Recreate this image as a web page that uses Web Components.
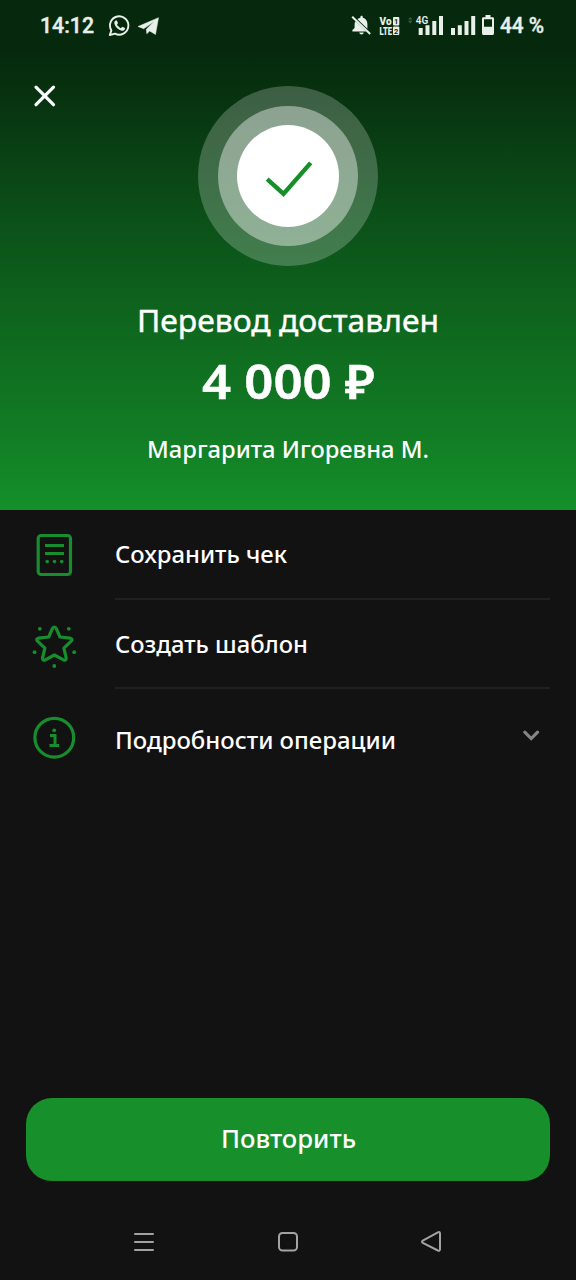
<!DOCTYPE html>
<html lang="ru">
<head>
<meta charset="utf-8">
<title>Перевод доставлен</title>
<style>
body { margin: 0; background: #121212; }
</style>
</head>
<body>
<transfer-screen></transfer-screen>
<script>
const define = (name, html) => {
  const template = document.createElement('template');
  template.innerHTML = html;
  customElements.define(name, class extends HTMLElement {
    constructor() {
      super();
      this.attachShadow({ mode: 'open' }).append(template.content.cloneNode(true));
    }
  });
};

// One line of text set to a fixed measure, left edge and baseline inside its own box.
customElements.define('text-line', class extends HTMLElement {
  connectedCallback() {
    if (this.shadowRoot) return;
    const a = n => this.getAttribute(n);
    this.attachShadow({ mode: 'open' }).innerHTML = `
      <style>
        :host { display: block; flex: none; }
        svg { display: block; overflow: visible; }
        text { fill: currentColor; font-family: ${a('face') || '"Noto Sans"'}, sans-serif;
               font-size: ${a('size')}px; font-weight: ${a('weight') || 500};
               stroke: currentColor; stroke-width: ${a('heft') || 0}; }
      </style>
      <svg width="${a('measure')}" height="${a('height')}"><text x="0" y="${a('baseline')}" textLength="${a('measure')}" lengthAdjust="spacingAndGlyphs">${a('text')}</text></svg>`;
  }
});

define('status-bar', `
<style>
  :host { display: flex; height: 52px; padding-left: 40px; box-sizing: border-box; color: #e9f0ea; }
  svg { display: block; flex: none; }
  .right { margin-left: auto; display: flex; width: 236px; }
</style>
<text-line text="14:12" face="Roboto" size="21.5" weight="500" measure="54" height="52" baseline="33" heft=".4"></text-line>
<svg width="70" height="52" viewBox="94 0 70 52" fill="none" stroke="currentColor">
  <path d="M109.800 35l1.600-4.600a9.200 9.200 0 1 1 3.600 3.300z" stroke-width="1.900" stroke-linejoin="round"/>
  <path d="M115.800 20.400c-1.300.6-1.800 2-1.300 3.600.9 3 4 6 7.200 6.700 1.500.3 2.900-.5 3.200-1.700l.1-1-2.700-1.300-1.400 1.500c-1.800-.8-3.100-2-3.900-3.600l1-1.300-1.100-2.800z" fill="currentColor" stroke="none"/>
  <path d="M138 26.500 158.500 17.700 155.500 34.500 149.700 31 146.800 33.700 146.300 29.200 154 21.600 143.700 28.700z" fill="currentColor" stroke="currentColor" stroke-width=".5"/>
</svg>
<div class="right">
  <svg width="160" height="52" viewBox="340 0 160 52" fill="currentColor">
    <path d="M355.600 21.200 366.200 31.400H352.400v-1.300l2.200-2V24q0-1.600 1-2.800zM357.500 19.300q1.200-1.100 2.900-1.500v-.8c0-1.600 2.400-1.600 2.400 0v.8c2.900.8 4.600 3.100 4.600 6.100v4.900z"/>
    <path d="M359.200 32.600h4.600c-.5 2.600-4.100 2.600-4.600 0z"/>
    <path d="M352.200 16.800l18 17.200" stroke="currentColor" stroke-width="2"/>
    <g font-family="Roboto, sans-serif" font-weight="900">
      <text x="379.500" y="25" font-size="10" textLength="12" lengthAdjust="spacingAndGlyphs">Vo</text>
      <text x="379.500" y="34.500" font-size="10" textLength="12.500" lengthAdjust="spacingAndGlyphs">LTE</text>
      <rect x="393" y="16.900" width="6.300" height="8.500" rx="1"/>
      <rect x="393" y="26.400" width="6.300" height="8.500" rx="1"/>
      <g fill="#06290e" font-weight="700"><text x="394" y="24" font-size="7.500">1</text><text x="394" y="33.500" font-size="7.500">2</text></g>
      <text x="415.800" y="24" font-size="11" font-weight="600" textLength="12.500" lengthAdjust="spacingAndGlyphs">4G</text>
    </g>
    <path d="M408 19.500l2.300-2.600 2.300 2.600zM408 20.800l2.300 2.600 2.300-2.600z" opacity=".25"/>
    <path d="M418.700 28h4v7h-4zM425.500 25.300h4v9.700h-4zM432.300 21h4v14h-4zM439 16h4v19h-4z"/>
    <path d="M451 28h4v7h-4zM457.800 25.300h4v9.700h-4zM464.500 21h4v14h-4zM471.200 16h4v19h-4z"/>
    <path fill-rule="evenodd" d="M485.500 15h5v2.300h2.200q1.300 0 1.300 1.300v15q0 1.400-1.300 1.400h-9.400q-1.300 0-1.300-1.400v-15q0-1.300 1.300-1.300h2.200zM484 19.300v7.400h8v-7.400z"/>
  </svg>
  <text-line text="44 %" face="Roboto" size="21.5" weight="500" measure="44" height="52" baseline="33" heft=".4"></text-line>
</div>`);

define('success-mark', `
<style>
  :host, .ring { display: grid; place-items: center; border-radius: 50%; }
  :host { width: 180px; height: 180px; background: rgba(255,255,255,.22); }
  .ring { width: 140px; height: 140px; background: rgba(255,255,255,.41); }
  .disc { width: 102px; height: 102px; border-radius: 50%; background: #fff; }
  svg { display: block; }
</style>
<div class="ring"><div class="disc">
  <svg width="102" height="102" viewBox="237 125 102 102"><path d="M267.200 179.200l16.300 14.700 27.200-31" fill="none" stroke="#159029" stroke-width="4.400"/></svg>
</div></div>`);

define('transfer-hero', `
<style>
  :host { display: flex; flex-direction: column; align-items: center; height: 510px; color: #fff; position: relative;
    background: linear-gradient(#06290e 0, #06290e 50px, #07310f 90px, #0a4215 160px, #0c551a 240px, #0f6a1f 340px, #127b25 430px, #149029 510px); }
  status-bar { align-self: stretch; flex: none; }
  .close { position: absolute; left: 33px; top: 84px; width: 24px; height: 24px; }
  success-mark { margin-top: 34px; flex: none; }
  .title { margin-top: 34px; }
  .sum { margin-top: 10px; }
  .name { margin-top: 22px; }
</style>
<status-bar></status-bar>
<svg class="close" viewBox="0 0 24 24"><path d="M3 3.200 20.500 20.700M20.500 3.200 3 20.700" stroke="#fff" stroke-width="3.200" stroke-linecap="round"/></svg>
<success-mark></success-mark>
<text-line class="title" text="Перевод доставлен" size="31" weight="400" measure="302" height="42" baseline="32.300" heft=".4"></text-line>
<text-line class="sum" text="4 000 ₽" size="47.500" weight="600" measure="173" height="58" baseline="46.700" heft=".5"></text-line>
<text-line class="name" text="Маргарита Игоревна М." size="24" measure="282" height="34" baseline="26"></text-line>`);

define('action-row', `
<style>
  :host { display: flex; align-items: stretch; padding: 0 26px 0 32px; box-sizing: border-box; height: var(--row, 89px); color: #fff; }
  .icon { width: 83px; flex: none; color: #188d2d; }
  .body { flex: 1; display: flex; justify-content: space-between; border-bottom: 2px solid var(--line, #202020); }
</style>
<div class="icon"><slot name="icon"></slot></div>
<div class="body"><slot></slot><slot name="end"></slot></div>`);

define('primary-button', `
<style>
  :host { display: flex; justify-content: center; height: 83px; border-radius: 26px; background: #178f2b; color: #fff; }
</style>
<slot></slot>`);

define('nav-bar', `
<style>
  :host { display: flex; justify-content: space-around; padding: 0 72px; color: #a3a3a3; }
  svg { display: block; width: 24px; height: 24px; fill: none; stroke: currentColor; stroke-width: 2; stroke-linecap: round; stroke-linejoin: round; }
</style>
<svg viewBox="132 1230 24 24"><path d="M135 1234h18M135 1242h18M135 1250h18"/></svg>
<svg viewBox="276 1230 24 24"><rect x="279" y="1233" width="18" height="17.600" rx="3.500"/></svg>
<svg viewBox="419.500 1230 24 24"><path d="M422.300 1240.600 437.400 1232.300q2-.9 2.100 1.200v15.800q-.1 2.100-2.100 1.200L422.300 1242.900q-1.600-1.200 0-2.300z"/></svg>`);

define('transfer-screen', `
<style>
  :host { display: flex; flex-direction: column; width: 576px; height: 1280px; background: #121212; overflow: hidden; }
  transfer-hero { flex: none; }
  action-row { flex: none; }
  .first { --row: 90px; }
  .last { --line: transparent; }
  svg { display: block; overflow: visible; fill: none; stroke: currentColor; stroke-width: 3.200; stroke-linejoin: round; }
  .dots { fill: currentColor; stroke: none; }
  primary-button { margin: auto 26px 0 26px; flex: none; }
  nav-bar { margin: 49px 0 26px; flex: none; }
</style>
<transfer-hero></transfer-hero>
<action-row class="first">
  <svg slot="icon" width="44" height="89" viewBox="32 510 44 89">
    <rect x="38.200" y="535.500" width="32.300" height="39" rx="3"/>
    <path d="M45 545.500h19M45 553.500h19" stroke-width="3"/>
    <g class="dots"><circle cx="47.200" cy="561.600" r="1.800"/><circle cx="54.500" cy="561.600" r="1.800"/><circle cx="61.700" cy="561.600" r="1.800"/></g>
  </svg>
  <text-line text="Сохранить чек" size="24" measure="172" height="80" baseline="53"></text-line>
</action-row>
<action-row>
  <svg slot="icon" width="44" height="89" viewBox="32 600 44 89">
    <path d="M52.500 628.300Q54.400 625.700 56.200 628.300L60 637 70.200 638.200Q73.300 638.900 71.200 641.200L63.900 648.200 66.200 658Q66.200 660.800 63.500 659.900L54.400 655 45.300 659.900Q42.500 660.800 42.500 658L44.900 648.200 37.500 641.200Q35.500 638.900 38.500 638.200L48.700 637z"/>
    <g class="dots"><circle cx="39.800" cy="628.800" r="1.900"/><circle cx="68.800" cy="628.800" r="1.900"/><circle cx="34.600" cy="652.200" r="1.900"/><circle cx="74.200" cy="652.200" r="1.900"/><circle cx="54.300" cy="666" r="1.900"/></g>
  </svg>
  <text-line text="Создать шаблон" size="24" measure="193" height="80" baseline="53"></text-line>
</action-row>
<action-row class="last">
  <svg slot="icon" width="44" height="89" viewBox="32 689 44 89">
    <circle cx="54.300" cy="737.700" r="19.400"/>
    <path d="M50 735.500h5v10M49.500 745.500h9.700" stroke-width="3" stroke-linejoin="miter"/>
    <circle cx="54.200" cy="730.300" r="1.900" fill="currentColor" stroke="none"/>
  </svg>
  <text-line text="Подробности операции" size="24" measure="281" height="80" baseline="60"></text-line>
  <svg slot="end" width="38" height="87" viewBox="512 689 38 87" style="color:#858585"><path d="M524.800 732.200l6.400 6.400 6.400-6.400" stroke-linecap="round" stroke-linejoin="miter"/></svg>
</action-row>
<primary-button><text-line text="Повторить" size="24.5" measure="135" height="83" baseline="50"></text-line></primary-button>
<nav-bar></nav-bar>`);
</script>
</body>
</html>
